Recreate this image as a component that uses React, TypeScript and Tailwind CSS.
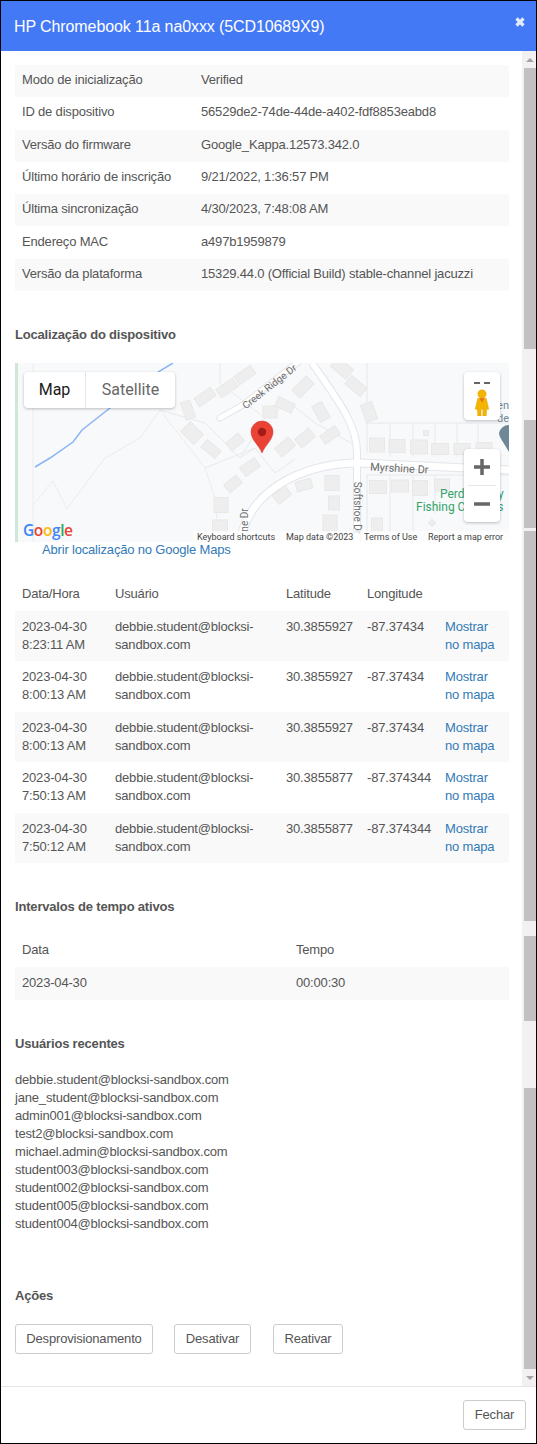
const info = [
  ["Modo de inicialização", "Verified"],
  ["ID de dispositivo", "56529de2-74de-44de-a402-fdf8853eabd8"],
  ["Versão do firmware", "Google_Kappa.12573.342.0"],
  ["Último horário de inscrição", "9/21/2022, 1:36:57 PM"],
  ["Última sincronização", "4/30/2023, 7:48:08 AM"],
  ["Endereço MAC", "a497b1959879"],
  ["Versão da plataforma", "15329.44.0 (Official Build) stable-channel jacuzzi"],
]

const locations = [
  ["8:23:11 AM", "30.3855927", "-87.37434"],
  ["8:00:13 AM", "30.3855927", "-87.37434"],
  ["8:00:13 AM", "30.3855927", "-87.37434"],
  ["7:50:13 AM", "30.3855877", "-87.374344"],
  ["7:50:12 AM", "30.3855877", "-87.374344"],
]

const users = [
  "debbie.student@blocksi-sandbox.com",
  "jane_student@blocksi-sandbox.com",
  "admin001@blocksi-sandbox.com",
  "test2@blocksi-sandbox.com",
  "michael.admin@blocksi-sandbox.com",
  "student003@blocksi-sandbox.com",
  "student002@blocksi-sandbox.com",
  "student005@blocksi-sandbox.com",
  "student004@blocksi-sandbox.com",
]

// center x, center y, width, height, rotation
const houses = [
  [230, 12, 20, 10, -35], [212, 25, 20, 10, -35], [190, 34, 20, 10, -35], [173, 47, 18, 10, 70],
  [177, 70, 18, 14, 45], [196, 86, 18, 10, 40], [220, 79, 16, 10, -40], [235, 104, 18, 11, -35],
  [218, 121, 16, 10, -40], [206, 142, 14, 15, 0], [205, 163, 15, 12, 0],
  [327, 5, 20, 12, 40], [341, 23, 20, 11, 40], [354, 49, 18, 12, 70], [288, 24, 20, 11, -45],
  [270, 42, 18, 10, 25], [306, 49, 18, 11, 60], [290, 75, 18, 11, -40], [315, 72, 18, 10, -35],
  [270, 84, 18, 11, -40], [255, 49, 14, 12, 0],
  [362, 82, 15, 14, 0], [382, 83, 16, 13, 0], [404, 84, 17, 14, 0], [425, 86, 17, 11, 0],
  [447, 86, 16, 11, 0], [469, 85, 16, 11, 0], [411, 70, 5, 5, 0],
  [363, 124, 17, 13, 0], [385, 123, 17, 12, 0], [405, 125, 15, 15, 0], [427, 122, 15, 12, 0],
  [289, 122, 16, 10, -15], [317, 120, 14, 15, 0], [319, 140, 11, 14, 0], [267, 132, 16, 11, -40],
  [315, 160, 14, 16, 0], [362, 162, 11, 14, 0], [417, 160, 5, 5, 40],
]

function MapPanel() {
  return (
    <div className="relative h-[179px] w-[494px] overflow-hidden bg-[#f8f9fa] font-['Roboto',sans-serif] tracking-normal">
      <svg className="absolute inset-0" width="494" height="179" viewBox="0 0 494 179">
        <rect x="0" y="0" width="3" height="179" fill="#cfe8d5" />
        <path d="M18 0V179" stroke="#ececec" fill="none" />
        <path d="M18 142L38 118 52 146 90 95 125 75 145 47 190 105 200 135 204 179" stroke="#ececec" fill="none" />
        <path d="M145 47L190 60 225 95 240 85 260 110 280 96M190 105L240 85M205 0V20L250 55 275 40 300 60 345 85M250 55L225 95" stroke="#e8e9eb" fill="none" />
        <path d="M352 0V60H494M352 60V90M352 112H494M352 112V179M375 60V94M398 60V94M420 60V94M442 60V94M463 60V94M375 112V179M398 112V179M420 112V150" stroke="#e6e8ec" fill="none" />
        <path d="M20 104L35 95 58 79 67 67 95 45 143 9 158 0" stroke="#8ab4f8" strokeWidth="1.5" fill="none" />
        <path d="M205 55L228 42 282 0" stroke="#e2e5ea" strokeWidth="7" fill="none" strokeLinecap="round" />
        <path d="M205 55L228 42 282 0" stroke="#ffffff" strokeWidth="5" fill="none" strokeLinecap="round" />
        <path d="M297 0C325 40 342 62 342 90V179" stroke="#e2e5ea" strokeWidth="8" fill="none" />
        <path d="M494 107L345 100C300 99 235 120 225 179" stroke="#e2e5ea" strokeWidth="9" fill="none" />
        <path d="M297 0C325 40 342 62 342 90V179" stroke="#ffffff" strokeWidth="6" fill="none" />
        <path d="M494 107L345 100C300 99 235 120 225 179" stroke="#ffffff" strokeWidth="7" fill="none" />
        {houses.map(([cx, cy, w, h, r], i) => (
          <rect key={i} x={cx - w / 2} y={cy - h / 2} width={w} height={h} fill="#eeeeee" stroke="#e8e8e8" transform={`rotate(${r} ${cx} ${cy})`} />
        ))}
        <path d="M494 89C489 80 484 74 484 70A10 10 0 0 1 494 62Z" fill="#6f8796" />
      </svg>
      <span className="absolute top-[15px] left-[222px] -rotate-[38deg] text-[10px] whitespace-nowrap text-[#6b6b6b]">Creek Ridge Dr</span>
      <span className="absolute top-[97px] left-[355px] rotate-[3deg] text-[11px] whitespace-nowrap text-[#6b6b6b]">Myrshine Dr</span>
      <span className="absolute top-[136px] left-[316px] rotate-90 text-[10px] whitespace-nowrap text-[#6b6b6b]">Softshoe Dr</span>
      <span className="absolute top-[148px] left-[218px] -rotate-90 text-[10px] whitespace-nowrap text-[#6b6b6b]">ne Dr</span>
      <span className="absolute top-[36px] right-0 text-right text-[11px] leading-[13px] text-[#6f8796]">en<br />de</span>
      <span className="absolute top-[125px] left-[401px] text-[12px] leading-[13px] whitespace-nowrap text-[#34a36a]">
        <span className="block pl-[24px]">Perdido Bay</span>
        <span className="block">Fishing Charters</span>
      </span>

      <div className="absolute top-[9px] left-[9px] flex h-[36px] overflow-hidden rounded-sm bg-white text-[16px] shadow-[0_1px_3px_rgba(0,0,0,0.25)]">
        <span className="flex w-[62px] items-center justify-center border-r border-[#e6e6e6] text-[#1a1a1a]">Map</span>
        <span className="flex w-[89px] items-center justify-center text-[#666666]">Satellite</span>
      </div>

      <div className="absolute top-[9px] right-[9px] h-[48px] w-[36px] rounded-sm bg-white shadow-[0_1px_3px_rgba(0,0,0,0.25)]">
        <div className="absolute top-[10px] left-[10px] h-[2px] w-[6px] bg-[#666666]" />
        <div className="absolute top-[10px] left-[20px] h-[2px] w-[6px] bg-[#666666]" />
        <svg className="absolute top-[17px] left-[10px]" width="16" height="27" viewBox="0 0 18 32">
          <circle cx="9" cy="6" r="5" fill="#f4b400" stroke="#d99a00" strokeWidth="0.5" />
          <path d="M4 11H14L17 24H14.5L14 32H10V24H8V32H4L3.5 24H1Z" fill="#f4b400" stroke="#d99a00" strokeWidth="0.5" />
          <path d="M6 11L9 16 12 11" fill="#e3711a" />
        </svg>
      </div>

      <div className="absolute top-[86px] right-[9px] flex h-[73px] w-[36px] flex-col items-center rounded-sm bg-white shadow-[0_1px_3px_rgba(0,0,0,0.25)]">
        <svg width="36" height="36" viewBox="0 0 36 36">
          <path d="M10 18H26M18 10V26" stroke="#666666" strokeWidth="3.5" />
        </svg>
        <div className="h-px w-[28px] bg-[#e6e6e6]" />
        <svg width="36" height="36" viewBox="0 0 36 36">
          <path d="M10 18H26" stroke="#666666" strokeWidth="3.5" />
        </svg>
      </div>

      <svg className="absolute top-[57px] left-[235px]" width="24" height="34" viewBox="0 0 24 34">
        <path d="M12 33C9 25 1 20 1 12A11 11 0 0 1 23 12C23 20 15 25 12 33Z" fill="#ea4335" stroke="#d3322a" strokeWidth="0.5" />
        <circle cx="12" cy="12" r="4.2" fill="#a51b16" />
      </svg>

      <div className="absolute bottom-[2px] left-[8px] font-['Open_Sans',sans-serif] text-[15.5px] leading-[20px] font-semibold tracking-[-0.4px]">
        <span className="text-[#4285f4]">G</span>
        <span className="text-[#ea4335]">o</span>
        <span className="text-[#fbbc05]">o</span>
        <span className="text-[#4285f4]">g</span>
        <span className="text-[#34a853]">l</span>
        <span className="text-[#ea4335]">e</span>
      </div>

      <div className="absolute right-0 bottom-0 flex h-[11px] w-[316px] items-center bg-white/70 pl-[4px] text-[9px] whitespace-nowrap text-[#444444]">
        <span className="w-[89px]">Keyboard shortcuts</span>
        <span className="w-[78px]">Map data ©2023</span>
        <span className="w-[64px]">Terms of Use</span>
        <span>Report a map error</span>
      </div>
    </div>
  )
}

const scrollSegments = [
  ["h-[281px]", "bg-[#c1c1c1]"],
  ["h-[71px]", ""],
  ["h-[108px]", "bg-[#c1c1c1]"],
  ["h-[3px]", ""],
  ["h-[390px]", "bg-[#c1c1c1]"],
  ["h-[15px]", ""],
  ["h-[85px]", "bg-[#c1c1c1]"],
  ["h-[67px]", ""],
  ["h-[281px]", "bg-[#c1c1c1]"],
]

function Scrollbar() {
  return (
    <div className="flex w-[14px] shrink-0 flex-col bg-[#f1f1f1]">
      <div className="flex h-[17px] items-center justify-center pl-[2px]">
        <div className="h-0 w-0 border-x-[4px] border-b-[4px] border-x-transparent border-b-[#a3a3a3]" />
      </div>
      <div className="flex flex-1 flex-col pl-[2px]">
        {scrollSegments.map(([h, bg], i) => (
          <div key={i} className={`${h} ${bg}`} />
        ))}
      </div>
      <div className="flex h-[17px] items-center justify-center pl-[2px]">
        <div className="h-0 w-0 border-x-[4px] border-t-[4px] border-x-transparent border-t-[#a3a3a3]" />
      </div>
    </div>
  )
}

export default function App() {
  return (
    <div className="flex h-[1444px] w-[537px] flex-col overflow-hidden border border-black bg-white font-['Liberation_Sans',Arial,sans-serif] text-[13px] leading-[18px] tracking-[-0.18px] text-[#555555]">
      <div className="relative flex h-[50px] shrink-0 items-center bg-[#4479f5] pt-[2px] pl-[13px] text-[16px] tracking-[-0.1px] text-white">
        HP Chromebook 11a na0xxx (5CD10689X9)
        <svg className="absolute top-[16px] right-[11px]" width="10" height="10" viewBox="0 0 10 10">
          <path d="M1.5 1.5L8.5 8.5M8.5 1.5L1.5 8.5" stroke="#e4ebfd" strokeWidth="3.2" />
        </svg>
      </div>

      <div className="flex min-h-0 flex-1">
        <div className="min-w-0 flex-1 pt-[14px] pl-[14px]">
          <div className="w-[494px]">
            {info.map(([label, value], i) => (
              <div key={label} className={`flex h-[32.3px] items-center pb-[2px] pl-[7px] ${i % 2 === 0 ? "bg-[#f9f9f9]" : ""}`}>
                <span className="w-[179px]">{label}</span>
                <span>{value}</span>
              </div>
            ))}
          </div>

          <h4 className="mt-[35px] mb-[19px] font-bold">Localização do dispositivo</h4>
          <MapPanel />
          <a className="-mt-px block pl-[27px] text-[#337ab7]">Abrir localização no Google Maps</a>

          <div className="mt-[16px] w-[494px]">
            <div className="grid h-[36px] grid-cols-[93px_171px_81px_78px_1fr] items-center pt-[2px] pl-[7px]">
              <span>Data/Hora</span>
              <span>Usuário</span>
              <span>Latitude</span>
              <span>Longitude</span>
            </div>
            {locations.map(([time, lat, lng], i) => (
              <div key={i} className={`grid h-[50.4px] grid-cols-[93px_171px_81px_78px_1fr] pt-[7px] pl-[7px] ${i % 2 === 0 ? "bg-[#f9f9f9]" : ""}`}>
                <span>2023-04-30<br />{time}</span>
                <span>debbie.student@blocksi-<br />sandbox.com</span>
                <span>{lat}</span>
                <span>{lng}</span>
                <a className="text-[#337ab7]">Mostrar<br />no mapa</a>
              </div>
            ))}
          </div>

          <h4 className="mt-[35px] mb-[17px] font-bold">Intervalos de tempo ativos</h4>
          <div className="w-[494px]">
            <div className="grid h-[34px] grid-cols-[274px_1fr] items-center pb-[1px] pl-[7px]">
              <span>Data</span>
              <span>Tempo</span>
            </div>
            <div className="grid h-[33px] grid-cols-[274px_1fr] items-center bg-[#f9f9f9] pb-[1px] pl-[7px]">
              <span>2023-04-30</span>
              <span>00:00:30</span>
            </div>
          </div>

          <h4 className="mt-[35px] mb-[18px] font-bold">Usuários recentes</h4>
          <div>
            {users.map((u) => (
              <div key={u}>{u}</div>
            ))}
          </div>

          <h4 className="mt-[54px] mb-[19px] font-bold">Ações</h4>
          <div className="flex gap-[21px]">
            <button className="h-[30px] w-[138px] rounded-[3px] border border-[#cccccc]">Desprovisionamento</button>
            <button className="h-[30px] w-[77px] rounded-[3px] border border-[#cccccc]">Desativar</button>
            <button className="ml-px h-[30px] w-[70px] rounded-[3px] border border-[#cccccc]">Reativar</button>
          </div>
        </div>
        <Scrollbar />
      </div>

      <div className="flex h-[57px] shrink-0 items-center justify-end border-t border-[#e5e5e5] pr-[10px]">
        <button className="h-[30px] w-[63px] rounded-[3px] border border-[#cccccc]">Fechar</button>
      </div>
    </div>
  )
}
